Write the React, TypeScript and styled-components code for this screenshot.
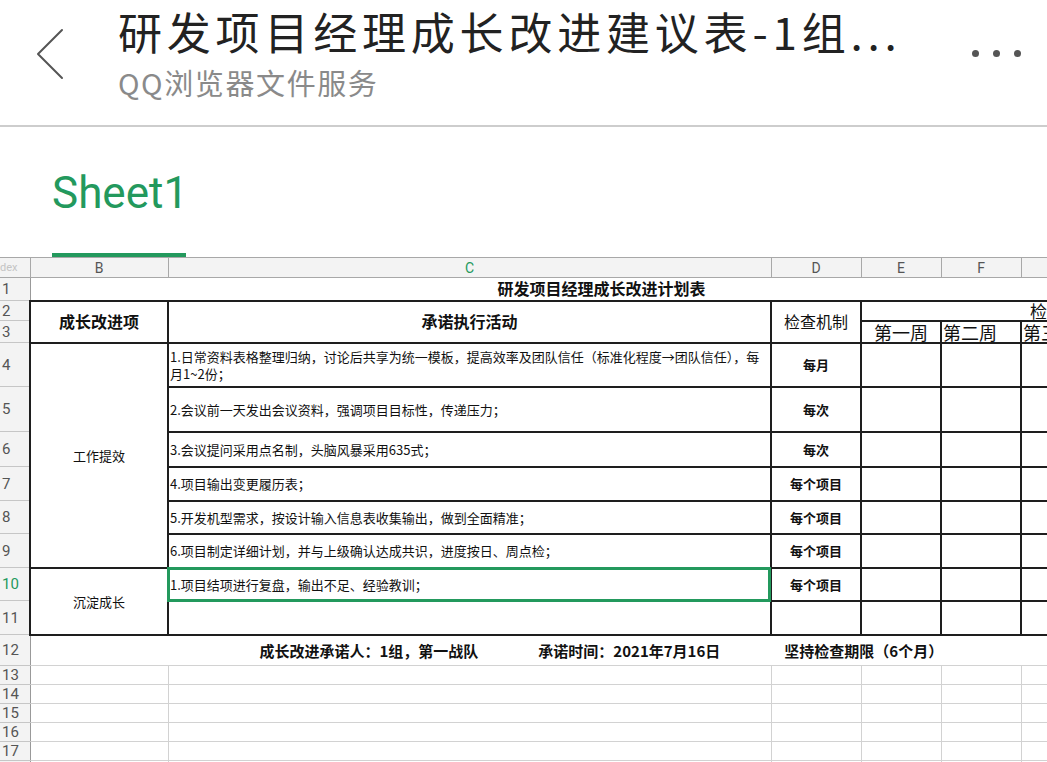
import React from "react"
import styled, { createGlobalStyle, css } from "styled-components"

const GlobalStyle = createGlobalStyle`
  html, body {
    margin: 0;
    padding: 0;
    background: #fff;
    overflow: hidden;
  }
  body {
    font-family: "Noto Sans CJK SC", "Noto Sans", sans-serif;
  }
`

const green = "#23995d"
const thick = "2px solid #1e1e1e"
const grid = "1px solid #d2d2d2"

const Page = styled.div`
  width: 1047px;
  height: 762px;
  overflow: hidden;
  display: flex;
  flex-direction: column;
`

const TopBar = styled.header`
  height: 125px;
  display: flex;
  align-items: flex-start;
  border-bottom: 2px solid #cdcdcd;
`

const BackButton = styled.button`
  width: 118px;
  height: 108px;
  border: 0;
  background: none;
  padding: 0 0 0 34px;
  display: flex;
  align-items: center;
  svg {
    width: 32px;
    height: 52px;
  }
`

const TitleBlock = styled.div`
  display: flex;
  flex-direction: column;
  padding-top: 6px;
  width: 820px;
`

const Title = styled.h1`
  margin: 0;
  font-size: 44px;
  line-height: 50px;
  letter-spacing: 4.8px;
  font-weight: 400;
  color: #222;
  white-space: nowrap;
`

const Subtitle = styled.div`
  font-size: 29px;
  line-height: 36px;
  letter-spacing: 1.6px;
  margin-top: 8px;
  color: #8a8a8a;
`

const MoreButton = styled.div`
  margin-left: auto;
  margin-top: 50px;
  margin-right: 26px;
  display: flex;
  gap: 14px;
  span {
    width: 7px;
    height: 7px;
    border-radius: 50%;
    background: #555;
  }
`

const TabBar = styled.nav`
  height: 130px;
  display: flex;
  align-items: flex-end;
  padding-left: 52px;
`

const Tab = styled.div`
  display: flex;
  flex-direction: column;
  align-items: flex-start;
  font-family: Roboto, "Noto Sans", sans-serif;
  font-size: 44px;
  color: ${green};
  line-height: 50px;
  &::after {
    content: "";
    display: block;
    width: 134px;
    height: 4px;
    margin-top: 35px;
    background: ${green};
  }
`

const SheetView = styled.div`
  flex: 1;
  overflow: hidden;
`

const Grid = styled.table`
  border-collapse: collapse;
  table-layout: fixed;
  width: 1101px;
`

const HeadCell = styled.th<{ $active?: boolean }>`
  height: 19px;
  padding: 0;
  background: #f3f3f3;
  border: 1px solid #a8a8a8;
  font-family: Roboto, "Noto Sans", sans-serif;
  font-size: 14px;
  font-weight: 400;
  color: ${({ $active }) => ($active ? green : "#555")};
`

const Corner = styled(HeadCell)`
  font-size: 11px;
  color: #c4c4c4;
  text-align: left;
  border-left: 0;
`

const RowNum = styled.th<{ $active?: boolean }>`
  padding: 0 0 0 2px;
  background: #f3f3f3;
  border-right: 1px solid #999;
  border-bottom: 1px solid #c6c6c6;
  font-family: Roboto, "Noto Sans", sans-serif;
  font-size: 15px;
  font-weight: 400;
  text-align: left;
  color: ${({ $active }) => ($active ? green : "#555")};
`

type Edge = "thick" | "grid" | "none"

const edge = (e?: Edge) => (e === "thick" ? thick : e === "none" ? "0" : grid)

const Cell = styled.td<{
  $bold?: boolean
  $size?: number
  $align?: "left" | "center"
  $box?: Edge
  $top?: Edge
  $selected?: boolean
}>`
  padding: 0 1px;
  font-size: ${({ $size }) => $size ?? 13}px;
  font-weight: ${({ $bold }) => ($bold ? 700 : 400)};
  text-align: ${({ $align }) => $align ?? "center"};
  color: #111;
  line-height: ${({ $size }) => (($size ?? 13) > 16 ? `${$size}px` : "17px")};
  border: ${({ $box }) => edge($box)};
  ${({ $top }) =>
    $top &&
    css`
      border-top: ${edge($top)};
    `}
  white-space: normal;
  ${({ $selected }) =>
    $selected &&
    css`
      position: relative;
      &::after {
        content: "";
        position: absolute;
        inset: -2px -1px -2px -2px;
        border: 3px solid ${green};
        pointer-events: none;
      }
    `}
`

const Line = styled.div<{ $gap: number }>`
  display: flex;
  white-space: nowrap;
  padding-left: ${({ $gap }) => $gap}px;
`

const Part = styled.span<{ $gap?: number }>`
  margin-right: ${({ $gap }) => $gap ?? 0}px;
`

const columns = [
  { key: "idx", width: 30 },
  { key: "B", width: 138 },
  { key: "C", width: 603 },
  { key: "D", width: 90 },
  { key: "E", width: 80 },
  { key: "F", width: 80 },
  { key: "G", width: 80 },
]

const activities = [
  {
    n: 4,
    h: 44,
    text: "1.日常资料表格整理归纳，讨论后共享为统一模板，提高效率及团队信任（标准化程度→团队信任），每月1~2份；",
    check: "每月",
  },
  { n: 5, h: 45, text: "2.会议前一天发出会议资料，强调项目目标性，传递压力；", check: "每次" },
  { n: 6, h: 35, text: "3.会议提问采用点名制，头脑风暴采用635式；", check: "每次" },
  { n: 7, h: 34, text: "4.项目输出变更履历表；", check: "每个项目" },
  { n: 8, h: 33, text: "5.开发机型需求，按设计输入信息表收集输出，做到全面精准；", check: "每个项目" },
  { n: 9, h: 34, text: "6.项目制定详细计划，并与上级确认达成共识，进度按日、周点检；", check: "每个项目" },
]

const blankRows = [
  { n: 13, h: 19 },
  { n: 14, h: 18 },
  { n: 15, h: 19 },
  { n: 16, h: 18 },
  { n: 17, h: 19 },
  { n: 18, h: 18 },
]

const WeekCells = () => (
  <>
    <Cell $box="thick" />
    <Cell $box="thick" />
    <Cell $box="thick" />
  </>
)

const BackIcon = () => (
  <svg viewBox="0 0 32 52" fill="none" stroke="#555" strokeWidth="2" strokeLinecap="round" strokeLinejoin="round">
    <path d="M28 2 L4 26 L28 50" />
  </svg>
)

const App = () => (
  <Page>
    <GlobalStyle />
    <TopBar>
      <BackButton aria-label="返回">
        <BackIcon />
      </BackButton>
      <TitleBlock>
        <Title>研发项目经理成长改进建议表-1组...</Title>
        <Subtitle>QQ浏览器文件服务</Subtitle>
      </TitleBlock>
      <MoreButton>
        <span />
        <span />
        <span />
      </MoreButton>
    </TopBar>

    <TabBar>
      <Tab>Sheet1</Tab>
    </TabBar>

    <SheetView>
      <Grid>
        <colgroup>
          {columns.map((c) => (
            <col key={c.key} style={{ width: c.width }} />
          ))}
        </colgroup>
        <thead>
          <tr>
            <Corner>dex</Corner>
            <HeadCell>B</HeadCell>
            <HeadCell $active>C</HeadCell>
            <HeadCell>D</HeadCell>
            <HeadCell>E</HeadCell>
            <HeadCell>F</HeadCell>
            <HeadCell />
          </tr>
        </thead>
        <tbody>
          <tr style={{ height: 23 }}>
            <RowNum>1</RowNum>
            <Cell colSpan={6} $bold $size={16} $align="left" $box="none">
              <Line $gap={466}>研发项目经理成长改进计划表</Line>
            </Cell>
          </tr>
          <tr style={{ height: 20 }}>
            <RowNum>2</RowNum>
            <Cell rowSpan={2} $bold $size={16} $box="thick">
              成长改进项
            </Cell>
            <Cell rowSpan={2} $bold $size={16} $box="thick">
              承诺执行活动
            </Cell>
            <Cell rowSpan={2} $size={16} $box="thick">
              检查机制
            </Cell>
            <Cell colSpan={3} $size={17} $align="left" $box="thick">
              <Line $gap={167}>检查记录</Line>
            </Cell>
          </tr>
          <tr style={{ height: 22 }}>
            <RowNum>3</RowNum>
            <Cell $size={18} $box="thick">
              第一周
            </Cell>
            <Cell $size={18} $align="left" $box="thick">
              第二周
            </Cell>
            <Cell $size={18} $align="left" $box="thick">
              第三周
            </Cell>
          </tr>
          {activities.map((a, i) => (
            <tr key={a.n} style={{ height: a.h }}>
              <RowNum>{a.n}</RowNum>
              {i === 0 && (
                <Cell rowSpan={activities.length} $box="thick">
                  工作提效
                </Cell>
              )}
              <Cell $align="left" $box="thick">
                {a.text}
              </Cell>
              <Cell $bold $box="thick">
                {a.check}
              </Cell>
              <WeekCells />
            </tr>
          ))}
          <tr style={{ height: 33 }}>
            <RowNum $active>10</RowNum>
            <Cell rowSpan={2} $box="thick">
              沉淀成长
            </Cell>
            <Cell $align="left" $box="thick" $selected>
              1.项目结项进行复盘，输出不足、经验教训；
            </Cell>
            <Cell $bold $box="thick">
              每个项目
            </Cell>
            <WeekCells />
          </tr>
          <tr style={{ height: 34 }}>
            <RowNum>11</RowNum>
            <Cell $box="thick" />
            <Cell $box="thick" />
            <WeekCells />
          </tr>
          <tr style={{ height: 31 }}>
            <RowNum>12</RowNum>
            <Cell colSpan={6} $bold $size={15} $align="left" $box="grid" $top="thick">
              <Line $gap={228}>
                <Part $gap={60}>成长改进承诺人：1组，第一战队</Part>
                <Part $gap={64}>承诺时间：2021年7月16日</Part>
                <Part>坚持检查期限（6个月）</Part>
              </Line>
            </Cell>
          </tr>
          {blankRows.map((r) => (
            <tr key={r.n} style={{ height: r.h }}>
              <RowNum>{r.n}</RowNum>
              {columns.slice(1).map((c) => (
                <Cell key={c.key} />
              ))}
            </tr>
          ))}
        </tbody>
      </Grid>
    </SheetView>
  </Page>
)

export default App
